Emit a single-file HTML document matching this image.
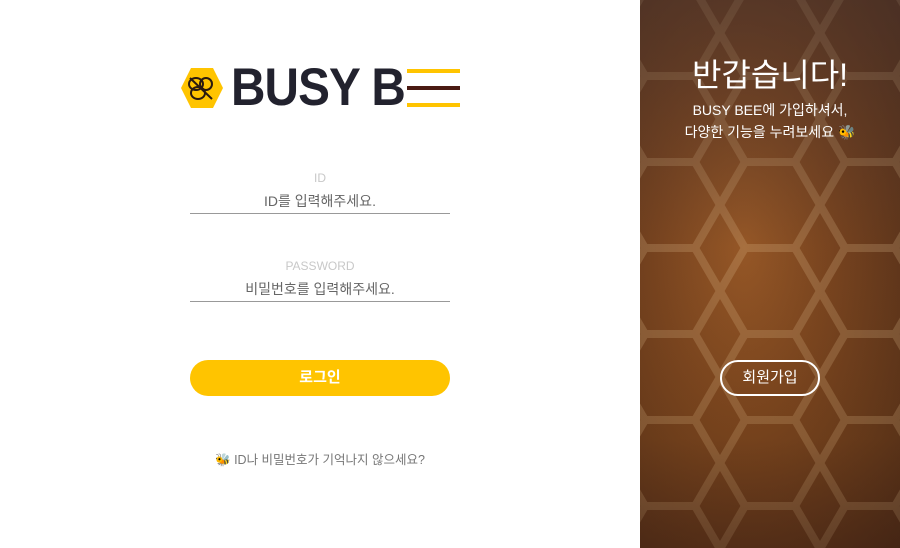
<!DOCTYPE html>
<html><head><meta charset="utf-8"><style>
*{margin:0;padding:0;box-sizing:border-box}
body{width:900px;height:548px;overflow:hidden;background:#fff;font-family:"Liberation Sans","Noto Sans CJK KR",sans-serif;position:relative}
.abs{position:absolute}
.lbl{left:190px;width:260px;text-align:center;font-size:12px;color:#c8c8c8}
.ph{left:190px;width:260px;text-align:center;font-size:14px;color:#666}
.line{left:190px;width:260px;height:1px;background:#999}
#right{left:640px;top:0;width:260px;height:548px;overflow:hidden;
background:radial-gradient(ellipse at 40% 45%,#9a5a28 0%,#7a4520 40%,#4a2a18 100%)}
</style></head><body>
<svg class="abs" style="left:180px;top:67px" width="44" height="42" viewBox="0 0 44 42">
<polygon points="11,1 33,1 43,21 33,41 11,41 1,21" fill="#ffc400"/>
<g fill="none" stroke="#2a1a10" stroke-width="2">
<ellipse cx="16" cy="17" rx="7" ry="6"/><ellipse cx="26" cy="17" rx="6" ry="6"/>
<ellipse cx="18" cy="26" rx="7" ry="6"/><line x1="10" y1="11" x2="32" y2="32"/></g>
</svg>
<div class="abs" style="left:231px;top:58px;font-size:53px;font-weight:bold;color:#22222e;letter-spacing:-1px;line-height:60px;transform:scaleX(.9);transform-origin:0 0;white-space:nowrap">BUSY B</div>
<div class="abs" style="left:407px;top:69px;width:53px;height:4px;background:#ffc400"></div>
<div class="abs" style="left:407px;top:86px;width:53px;height:4px;background:#4a1a12"></div>
<div class="abs" style="left:407px;top:103px;width:53px;height:4px;background:#ffc400"></div>

<div class="abs lbl" style="top:171px">ID</div>
<div class="abs ph" style="top:191px">ID를 입력해주세요.</div>
<div class="abs line" style="top:213px"></div>
<div class="abs lbl" style="top:259px">PASSWORD</div>
<div class="abs ph" style="top:279px">비밀번호를 입력해주세요.</div>
<div class="abs line" style="top:301px"></div>
<div class="abs" style="left:190px;top:360px;width:260px;height:36px;border-radius:18px;background:#ffc400;color:#fff;font-weight:bold;font-size:15px;text-align:center;line-height:36px">로그인</div>
<div class="abs" style="left:180px;top:449px;width:280px;text-align:center;font-size:12.5px;color:#777">🐝 ID나 비밀번호가 기억나지 않으세요?</div>

<div id="right" class="abs">
<svg width="260" height="548" style="position:absolute;left:0;top:0;opacity:.22">
<defs><pattern id="h" width="100" height="86" patternUnits="userSpaceOnUse" patternTransform="translate(-20,-10)">
<g fill="none" stroke="#f0d0a0" stroke-width="8">
<polygon points="25,0 75,0 100,43 75,86 25,86 0,43"/>
</g></pattern></defs>
<rect width="260" height="548" fill="url(#h)"/>
</svg>
<div class="abs" style="left:0;top:0;width:260px;height:548px;background:linear-gradient(180deg,rgba(70,50,45,.55),rgba(60,30,10,.05) 45%,rgba(110,60,10,.15) 80%,rgba(60,30,15,.4))"></div>
<div class="abs" style="left:0;top:50px;width:260px;text-align:center;color:#fff;font-size:32px">반갑습니다!</div>
<div class="abs" style="left:0;top:99px;width:260px;text-align:center;color:#fff;font-size:14px;line-height:22px">BUSY BEE에 가입하셔서,<br>다양한 기능을 누려보세요 🐝</div>
<div class="abs" style="left:80px;top:360px;width:100px;height:36px;border:2px solid #fff;border-radius:18px;color:#fff;font-size:15px;text-align:center;line-height:32px">회원가입</div>
</div>
</body></html>
